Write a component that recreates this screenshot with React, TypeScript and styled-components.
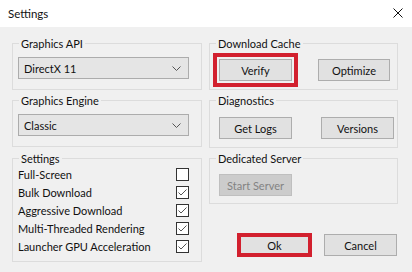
import React from "react";
import styled, { createGlobalStyle } from "styled-components";

// Types
type CheckOption = {
  label: string;
  checked: boolean;
};

type Spacing = {
  $mt: number;
  $pt: number;
  $pb: number;
  $pl: number;
  $pr: number;
};

type GroupProps = Spacing & {
  title: string;
  children: React.ReactNode;
};

// Global styles
const GlobalStyle = createGlobalStyle`
  html, body {
    margin: 0;
    padding: 0;
    background: #f0f0f0;
  }
  body {
    font-family: Lato, "Noto Sans", sans-serif;
    font-size: 11px;
    color: #111;
  }
`;

// Styled components
const Window = styled.div`
  width: 412px;
  height: 272px;
  background: #f0f0f0;
  display: flex;
  flex-direction: column;
  overflow: hidden;
`;

const TitleBar = styled.div`
  height: 27px;
  flex: none;
  background: #fff;
  display: flex;
  align-items: center;
  justify-content: space-between;
  padding: 0 9px 0 8px;
  box-sizing: border-box;
  font-size: 11.5px;
`;

const CloseIcon = styled.svg`
  width: 10px;
  height: 10px;
  margin-top: -1px;
`;

const Body = styled.div`
  flex: 1;
  padding: 0 14px 0 12px;
  display: grid;
  grid-template-columns: 190px 189px;
  column-gap: 7px;
  align-items: start;
`;

const Column = styled.div`
  display: flex;
  flex-direction: column;
`;

const GroupBox = styled.div<Spacing>`
  margin-top: ${(p) => p.$mt}px;
  border: 1px solid #dcdcdc;
  padding: ${(p) => `0 ${p.$pr}px ${p.$pb}px ${p.$pl}px`};
  display: flex;
  flex-direction: column;
`;

const Caption = styled.div<{ $pl: number; $pt: number }>`
  align-self: flex-start;
  height: 16px;
  line-height: 16px;
  margin: -8px 0 ${(p) => p.$pt}px ${(p) => 6 - p.$pl}px;
  padding: 0 2px;
  background: #f0f0f0;
  white-space: nowrap;
`;

const Select = styled.div`
  height: 22px;
  box-sizing: border-box;
  background: #e5e5e5;
  border: 1px solid #acacac;
  display: flex;
  align-items: center;
  justify-content: space-between;
  padding: 0 7px 0 5px;
`;

const Chevron = styled.svg`
  width: 9px;
  height: 5px;
`;

const ButtonRow = styled.div`
  display: flex;
  justify-content: space-between;
`;

const Button = styled.button<{ $highlight?: "wide" | "tight"; $width?: number }>`
  width: ${(p) => p.$width ?? 73}px;
  height: 22px;
  box-sizing: border-box;
  margin: 0;
  padding: 0;
  background: #e1e1e1;
  border: 1px solid #adadad;
  border-radius: 0;
  font-family: inherit;
  font-size: 11px;
  color: #111;
  outline: ${(p) => (p.$highlight ? "4px solid #d2202e" : "none")};
  outline-offset: ${(p) => (p.$highlight === "wide" ? "2px" : "-3px")};

  &:disabled {
    background: #cccccc;
    border-color: #bfbfbf;
    color: #838383;
  }
`;

const CheckRow = styled.div`
  height: 17.8px;
  display: flex;
  align-items: center;
  justify-content: space-between;
`;

const CheckBox = styled.span`
  width: 13px;
  height: 13px;
  box-sizing: border-box;
  border: 1px solid #333;
  background: #fff;
  display: flex;
  align-items: center;
  justify-content: center;
`;

const Footer = styled.div`
  margin-top: 30px;
  padding-right: 1px;
  display: flex;
  justify-content: flex-end;
  gap: 13px;
`;

const options: CheckOption[] = [
  { label: "Full-Screen", checked: false },
  { label: "Bulk Download", checked: true },
  { label: "Aggressive Download", checked: true },
  { label: "Multi-Threaded Rendering", checked: true },
  { label: "Launcher GPU Acceleration", checked: true },
];

const Group: React.FC<GroupProps> = ({ title, children, ...sp }) => (
  <GroupBox {...sp}>
    <Caption $pl={sp.$pl} $pt={sp.$pt}>
      {title}
    </Caption>
    {children}
  </GroupBox>
);

const Dropdown: React.FC<{ value: string }> = ({ value }) => (
  <Select>
    <span>{value}</span>
    <Chevron viewBox="0 0 9 5">
      <polyline points="0.5,0.5 4.5,4.5 8.5,0.5" fill="none" stroke="#555" strokeWidth="1" />
    </Chevron>
  </Select>
);

const Check: React.FC<CheckOption> = ({ label, checked }) => (
  <CheckRow>
    <span>{label}</span>
    <CheckBox>
      {checked && (
        <svg width="11" height="11" viewBox="0 0 11 11">
          <polyline points="1.5,5.5 4,8 9.5,2.5" fill="none" stroke="#555" strokeWidth="1" />
        </svg>
      )}
    </CheckBox>
  </CheckRow>
);

const App: React.FC = () => {
  return (
    <>
      <GlobalStyle />
      <Window>
        <TitleBar>
          <span>Settings</span>
          <CloseIcon viewBox="0 0 10 10">
            <path d="M0.5 0.5 L9.5 9.5 M9.5 0.5 L0.5 9.5" stroke="#111" strokeWidth="1" />
          </CloseIcon>
        </TitleBar>
        <Body>
          <Column>
            <Group title="Graphics API" $mt={16} $pt={5} $pb={10} $pl={5} $pr={12}>
              <Dropdown value="DirectX 11" />
            </Group>
            <Group title="Graphics Engine" $mt={10} $pt={5} $pb={10} $pl={5} $pr={12}>
              <Dropdown value="Classic" />
            </Group>
            <Group title="Settings" $mt={11} $pt={-1} $pb={6} $pl={5} $pr={12}>
              {options.map((o) => (
                <Check key={o.label} {...o} />
              ))}
            </Group>
          </Column>
          <Column>
            <Group title="Download Cache" $mt={16} $pt={7} $pb={8} $pl={9} $pr={7}>
              <ButtonRow>
                <Button $highlight="wide">Verify</Button>
                <Button $width={72}>Optimize</Button>
              </ButtonRow>
            </Group>
            <Group title="Diagnostics" $mt={10} $pt={8} $pb={8} $pl={9} $pr={3}>
              <ButtonRow>
                <Button>Get Logs</Button>
                <Button>Versions</Button>
              </ButtonRow>
            </Group>
            <Group title="Dedicated Server" $mt={10} $pt={7} $pb={7} $pl={9} $pr={7}>
              <ButtonRow>
                <Button disabled>Start Server</Button>
              </ButtonRow>
            </Group>
            <Footer>
              <Button $highlight="tight">Ok</Button>
              <Button>Cancel</Button>
            </Footer>
          </Column>
        </Body>
      </Window>
    </>
  );
};

export default App;
